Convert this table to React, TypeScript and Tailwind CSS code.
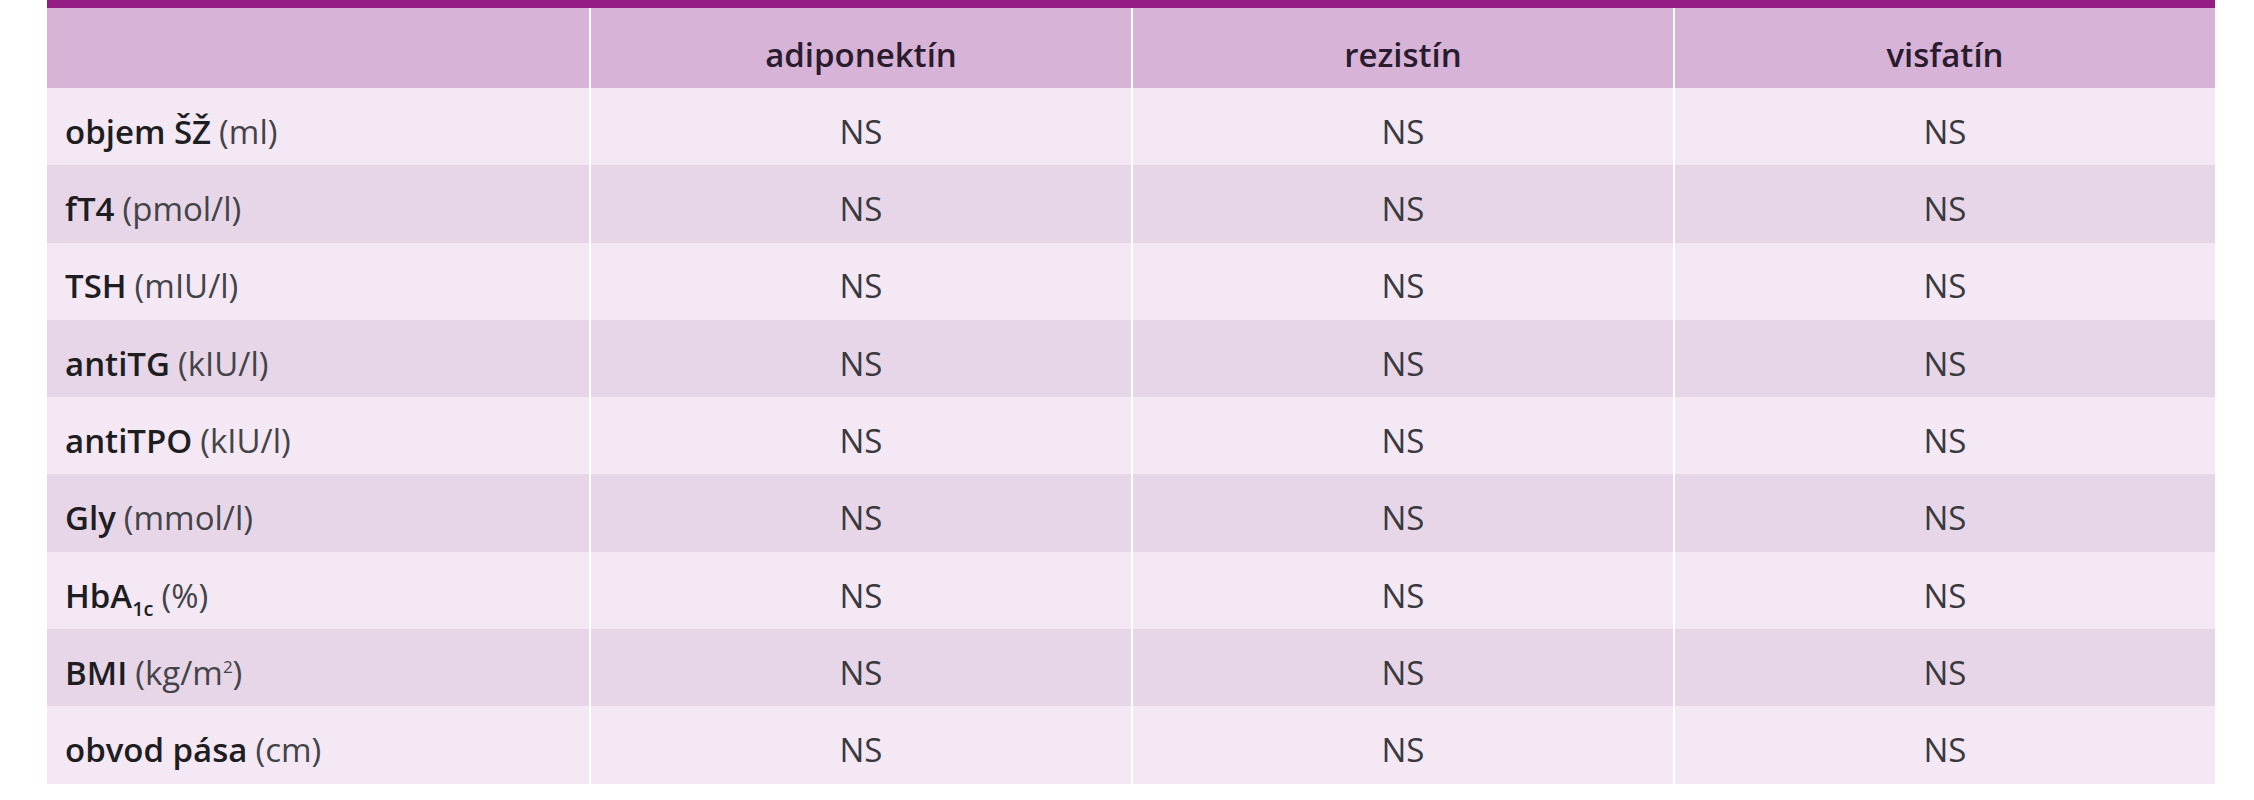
import React from "react";

type Row = { label: React.ReactNode; unit: React.ReactNode };

const rows: Row[] = [
  { label: "objem ŠŽ", unit: "(ml)" },
  { label: "fT4", unit: "(pmol/l)" },
  { label: "TSH", unit: "(mIU/l)" },
  { label: "antiTG", unit: "(kIU/l)" },
  { label: "antiTPO", unit: "(kIU/l)" },
  { label: "Gly", unit: "(mmol/l)" },
  {
    label: (
      <>
        HbA<sub className="relative -bottom-[8px] align-baseline text-[20px]">1c</sub>
      </>
    ),
    unit: "(%)",
  },
  {
    label: "BMI",
    unit: (
      <>
        (kg/m<sup className="relative -top-[12px] align-baseline text-[17px]">2</sup>)
      </>
    ),
  },
  { label: "obvod pása", unit: "(cm)" },
];

const columns = ["adiponektín", "rezistín", "visfatín"];

export default function App() {
  return (
    <div className="h-[800px] w-[2254px] bg-white font-['Open_Sans',sans-serif]">
      <div className="ml-[47px] w-[2168px]">
        <div className="h-[8px] bg-[#951c82]" />
        <div className="grid h-[80px] grid-cols-4 bg-[#d6b3d7] text-[33px] font-semibold text-[#2a1c2e]">
          <div />
          {columns.map((c) => (
            <div key={c} className="flex items-center justify-center border-l-2 border-white pt-[14px]">
              {c}
            </div>
          ))}
        </div>
        {rows.map((row, i) => (
          <div
            key={i}
            className={
              "grid h-[77.3px] grid-cols-4 text-[33px] " +
              (i % 2 === 0 ? "bg-[#f4e8f5]" : "bg-[#e7d6e8]")
            }
          >
            <div className="flex items-center pl-[18px] pt-[10px] text-[#444448]">
              <span className="font-semibold text-[#1e1e22]">{row.label}</span>
              <span className="ml-[8px]">{row.unit}</span>
            </div>
            {columns.map((c) => (
              <div
                key={c}
                className="flex items-center justify-center border-l-2 border-white pt-[10px] text-[#3a3a3e]"
              >
                NS
              </div>
            ))}
          </div>
        ))}
      </div>
    </div>
  );
}
